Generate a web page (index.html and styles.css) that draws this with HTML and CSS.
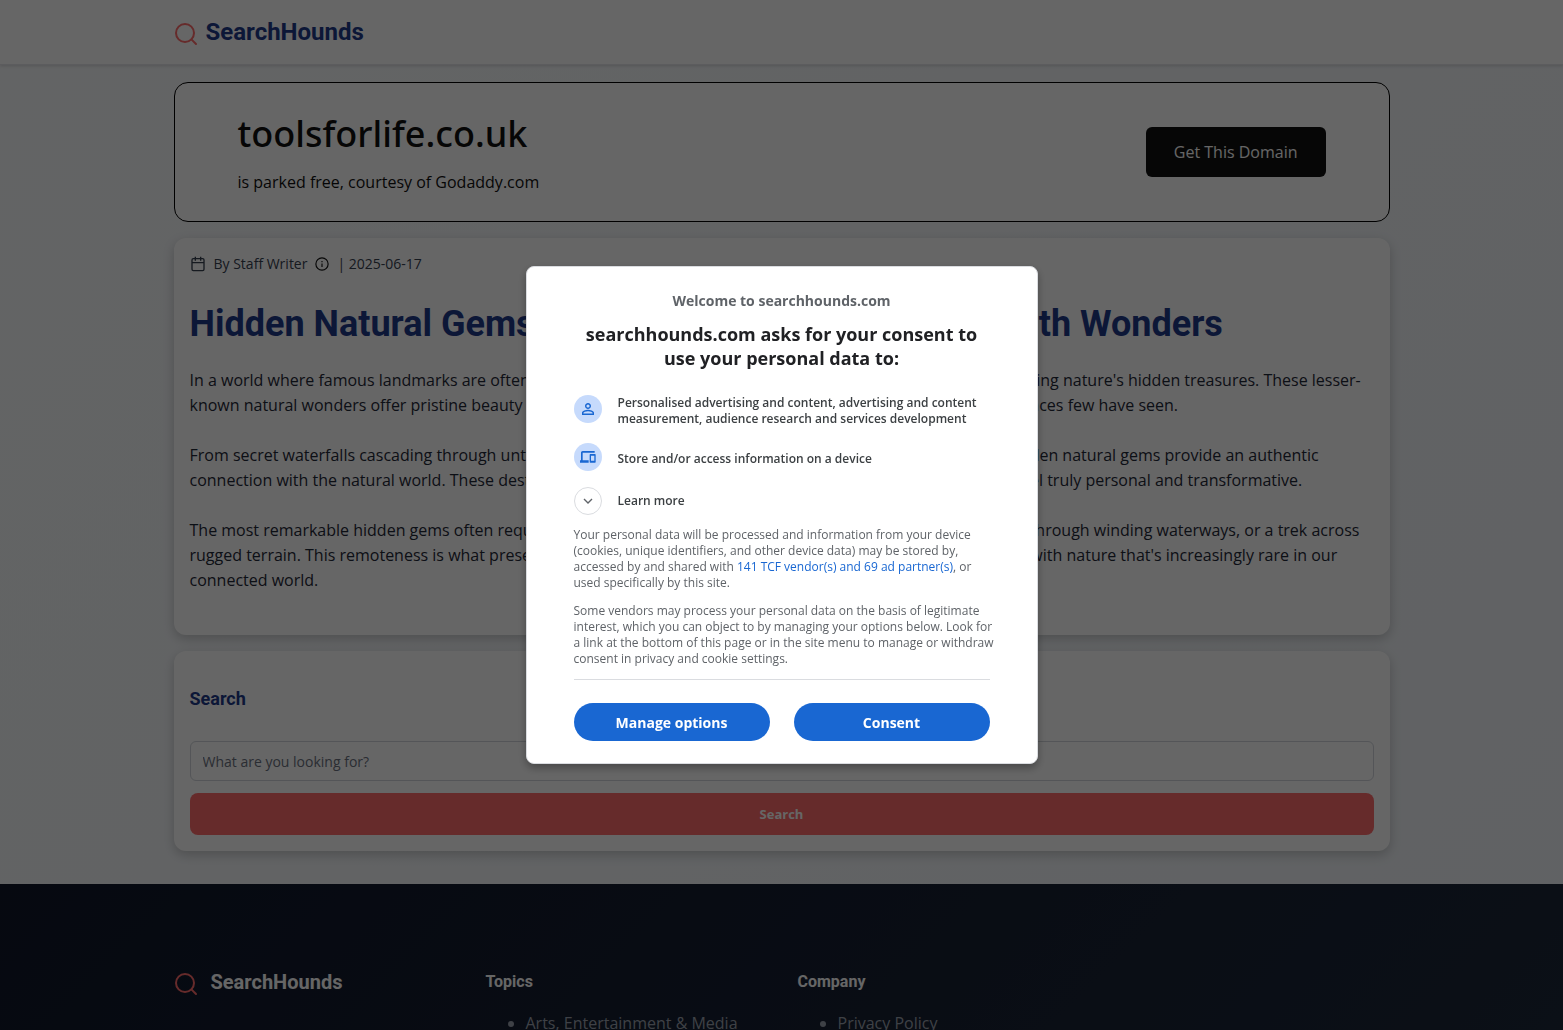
FILE: index.html
```html
<!DOCTYPE html>
<html lang="en">
<head>
  <meta charset="UTF-8">
  <meta name="viewport" content="width=device-width, initial-scale=1.0">
  <title>SearchHounds</title>
  <link rel="stylesheet" href="styles.css">
</head>
<body>

<header class="site-header">
  <div class="container">
    <a class="logo" href="#">
      <svg class="logo-icon" viewBox="0 0 24 24" width="24" height="24"><circle cx="11" cy="11" r="9"/><path d="M22 22l-4.6-4.6"/></svg>
      <span>SearchHounds</span>
    </a>
  </div>
</header>

<main class="container">
  <section class="domain">
    <div>
      <h2>toolsforlife.co.uk</h2>
      <p>is parked free, courtesy of Godaddy.com</p>
    </div>
    <a class="domain-btn" href="#">Get This Domain</a>
  </section>

  <article class="card">
    <div class="meta">
      <svg viewBox="0 0 24 24" width="16" height="16"><rect x="3" y="4" width="18" height="18" rx="2"/><path d="M8 1v6M16 1v6M3 10h18"/></svg>
      <span>By Staff Writer</span>
      <svg class="info" viewBox="0 0 24 24" width="14" height="14"><circle cx="12" cy="12" r="10.5"/><path d="M12 11v6M12 7v2"/></svg>
      <span>| 2025-06-17</span>
    </div>
    <h1>Hidden Natural Gems: Discovering Off the Beaten Path Wonders</h1>
    <p>In a world where famous landmarks are often overflowing with tourists, there's something magical about discovering nature's hidden treasures. These lesser-known natural wonders offer pristine beauty and tranquility, away from the crowds, giving visitors a glimpse of places few have seen.</p>
    <p>From secret waterfalls cascading through untouched forests to remote ice caves glittering with crystals, these hidden natural gems provide an authentic connection with the natural world. These destinations reward curious explorers with intimate experiences that feel truly personal and transformative.</p>
    <p>The most remarkable hidden gems often require effort to reach, whether it's a long, challenging hike, a boat ride through winding waterways, or a trek across rugged terrain. This remoteness is what preserves their beauty, offering visitors an intimate personal connection with nature that's increasingly rare in our connected world.</p>
  </article>

  <section class="card">
    <h3>Search</h3>
    <form class="search-form">
      <input type="text" aria-label="Search" placeholder="What are you looking for?">
      <button type="button">Search</button>
    </form>
  </section>
</main>

<footer class="site-footer">
  <div class="container footer-grid">
    <div class="logo footer-logo">
      <svg class="logo-icon" viewBox="0 0 24 24" width="24" height="24"><circle cx="11" cy="11" r="9"/><path d="M22 22l-4.6-4.6"/></svg>
      <span>SearchHounds</span>
    </div>
    <div>
      <h4>Topics</h4>
      <ul>
        <li><a href="#">Arts, Entertainment &amp; Media</a></li>
      </ul>
    </div>
    <div>
      <h4>Company</h4>
      <ul>
        <li><a href="#">Privacy Policy</a></li>
      </ul>
    </div>
  </div>
</footer>

<!-- Consent dialog -->
<div class="overlay">
  <div class="dialog" role="dialog" aria-labelledby="consentTitle">
    <p class="welcome">Welcome to searchhounds.com</p>
    <h2 id="consentTitle">searchhounds.com asks for your consent to use your personal data to:</h2>
    <ul class="purposes">
      <li>
        <span class="badge"><svg viewBox="0 0 24 24" width="18" height="18"><path d="M12 5.9a2.1 2.1 0 1 1 0 4.2 2.1 2.1 0 0 1 0-4.2m0 9c2.970 0 6.100 1.460 6.100 2.100v1.100H5.900V17c0-.640 3.130-2.100 6.100-2.100M12 4C9.790 4 8 5.790 8 8s1.790 4 4 4 4-1.790 4-4-1.790-4-4-4zm0 9c-2.670 0-8 1.340-8 4v3h16v-3c0-2.660-5.330-4-8-4z"/></svg></span>
        <span>Personalised advertising and content, advertising and content measurement, audience research and services development</span>
      </li>
      <li>
        <span class="badge"><svg viewBox="0 0 24 24" width="16" height="16"><path d="M4 5.500h18V3H4c-1.400 0-2.500 1.100-2.500 2.500V17H0v3.500h13V17H4V5.500zM22.500 7.500h-7c-.600 0-1 .400-1 1v11c0 .600.400 1 1 1h7c.600 0 1-.400 1-1v-11c0-.600-.400-1-1-1zM21.500 17.500h-5v-7.500h5v7.500z"/></svg></span>
        <span>Store and/or access information on a device</span>
      </li>
    </ul>
    <button class="more" type="button">
      <span class="badge outline"><svg viewBox="0 0 24 24" width="16" height="16"><path d="M6 9l6 6 6-6"/></svg></span>
      <span>Learn more</span>
    </button>
    <p class="note">Your personal data will be processed and information from your device (cookies, unique identifiers, and other device data) may be stored by, accessed by and shared with <a href="#">141 TCF vendor(s) and 69 ad partner(s)</a>, or used specifically by this site.</p>
    <p class="note">Some vendors may process your personal data on the basis of legitimate interest, which you can object to by managing your options below. Look for a link at the bottom of this page or in the site menu to manage or withdraw consent in privacy and cookie settings.</p>
    <div class="actions">
      <button type="button">Manage options</button>
      <button type="button">Consent</button>
    </div>
  </div>
</div>

</body>
</html>
```
FILE: styles.css
```css
* {
  box-sizing: border-box;
}
body {
  margin: 0;
  height: 100vh;
  overflow: hidden;
  font-family: "Open Sans", sans-serif;
  font-size: 16px;
  line-height: 25px;
  color: #1f2937;
  background: linear-gradient(135deg, #f8fafc, #f1f5f9);
}
h1, h2, h3, h4, p, ul {
  margin: 0;
}
button, input {
  font-family: inherit;
}
.container {
  max-width: 1248px;
  margin: 0 auto;
  padding: 0 16px;
}

/* Header */
.site-header {
  background: #fff;
  padding: 16px 0;
  border-bottom: 1px solid #e5e7eb;
  box-shadow: 0 1px 3px rgba(0,0,0,0.15);
}
.logo {
  display: flex;
  align-items: center;
  gap: 8px;
  height: 32px;
  font-family: Roboto, sans-serif;
  font-size: 24px;
  font-weight: 700;
  color: #1e3a8a;
  text-decoration: none;
}
.logo-icon {
  margin-top: 4px;
  fill: none;
  stroke: #ff6b6b;
  stroke-width: 2;
  stroke-linecap: round;
}

main.container {
  display: flex;
  flex-direction: column;
  gap: 16px;
  padding-top: 17px;
  padding-bottom: 33px;
}

/* Parked domain box */
.domain {
  display: flex;
  align-items: center;
  justify-content: space-between;
  padding: 26px 63px;
  background: #fff;
  border: 1px solid #000;
  border-radius: 14px;
  color: #111;
}
.domain h2 {
  margin-bottom: 11px;
  font-family: "Noto Sans", sans-serif;
  font-size: 36px;
  font-weight: 500;
  line-height: 50px;
}
.domain-btn {
  padding: 12px 28px;
  background: #111;
  border-radius: 6px;
  color: #fff;
  line-height: 26px;
  text-decoration: none;
}

/* Cards */
.card {
  padding: 16px;
  background: #fff;
  border-radius: 12px;
  box-shadow: 0 4px 12px rgba(0,0,0,0.2);
}
.meta {
  display: flex;
  align-items: center;
  gap: 8px;
  font-size: 14px;
  line-height: 20px;
  color: #374151;
}
.meta svg {
  fill: none;
  stroke: #374151;
  stroke-width: 2;
}
.meta .info {
  stroke: #111;
}
.card h1 {
  margin: 28px 0 21px;
  font-family: Roboto, sans-serif;
  font-size: 36px;
  line-height: 45px;
  color: #1e3a8a;
}
.card p {
  margin-bottom: 25px;
}
.card p:last-child {
  margin-bottom: 26px;
}
.card h3 {
  margin: 17px 0 27px;
  font-family: Roboto, sans-serif;
  font-size: 18px;
  line-height: 30px;
  color: #1e3a8a;
}
.search-form {
  display: flex;
  flex-direction: column;
  gap: 12px;
}
.search-form input {
  height: 40px;
  padding: 0 12px;
  border: 1px solid #d1d5db;
  border-radius: 6px;
  background: #fff;
  font-size: 14px;
}
.search-form input::placeholder {
  color: #6b7280;
}
.search-form button {
  height: 42px;
  border: none;
  border-radius: 8px;
  background: #ff6b6b;
  color: #fff;
  font-size: 13px;
  font-weight: 700;
}

/* Footer */
.site-footer {
  padding: 80px 0;
  background: linear-gradient(135deg, #0f172a, #1e293b);
  color: #fff;
}
.footer-grid {
  display: grid;
  grid-template-columns: repeat(4, 1fr);
  gap: 32px;
}
.footer-logo {
  gap: 13px;
  height: 36px;
  font-size: 20px;
  color: #fff;
}
.footer-grid h4 {
  margin: 5px 0 17px;
  font-family: Roboto, sans-serif;
  font-size: 16px;
}
.footer-grid ul {
  padding-left: 40px;
  color: #9ca3af;
}
.footer-grid a {
  color: #9ca3af;
  text-decoration: none;
}

/* Consent dialog */
.overlay {
  position: fixed;
  inset: 0;
  display: flex;
  align-items: center;
  justify-content: center;
  background: rgba(0,0,0,0.6);
}
.dialog {
  width: 512px;
  padding: 24px 47px 22px;
  background: #fff;
  border: 1px solid #dadce0;
  border-radius: 8px;
  box-shadow: 0 4px 8px rgba(0,0,0,0.3);
}
.welcome {
  font-size: 14px;
  font-weight: 700;
  line-height: 20px;
  text-align: center;
  color: #5f6368;
}
.dialog h2 {
  margin: 11px 0 25px;
  font-size: 18px;
  line-height: 24px;
  text-align: center;
  color: #202124;
}
.purposes {
  display: flex;
  flex-direction: column;
  gap: 16px;
  margin-bottom: 12px;
  padding: 0;
  list-style: none;
}
.purposes li, .more {
  display: flex;
  align-items: center;
  gap: 16px;
  font-size: 12px;
  font-weight: 600;
  line-height: 16px;
  color: #3c4043;
}
.purposes li {
  min-height: 32px;
}
.purposes .badge {
  align-self: flex-start;
}
.more {
  padding: 0;
  margin-bottom: 12px;
  border: none;
  background: none;
}
.badge {
  display: flex;
  flex: none;
  align-items: center;
  justify-content: center;
  width: 28px;
  height: 28px;
  border-radius: 50%;
  background: #c6dafc;
}
.badge svg {
  fill: #1967d2;
}
.badge.outline {
  background: none;
  border: 1px solid #dadce0;
}
.badge.outline svg {
  fill: none;
  stroke: #5f6368;
  stroke-width: 2;
}
.note {
  margin: 0 -4px 12px 0;
  font-size: 12px;
  line-height: 16px;
  color: #5f6368;
}
.note a {
  color: #1967d2;
  text-decoration: none;
}
.actions {
  display: flex;
  gap: 24px;
  padding-top: 23px;
  border-top: 1px solid #dadce0;
}
.actions button {
  flex: 1;
  height: 38px;
  border: none;
  border-radius: 19px;
  background: #1967d2;
  color: #fff;
  font-size: 14px;
  font-weight: 700;
}
```
